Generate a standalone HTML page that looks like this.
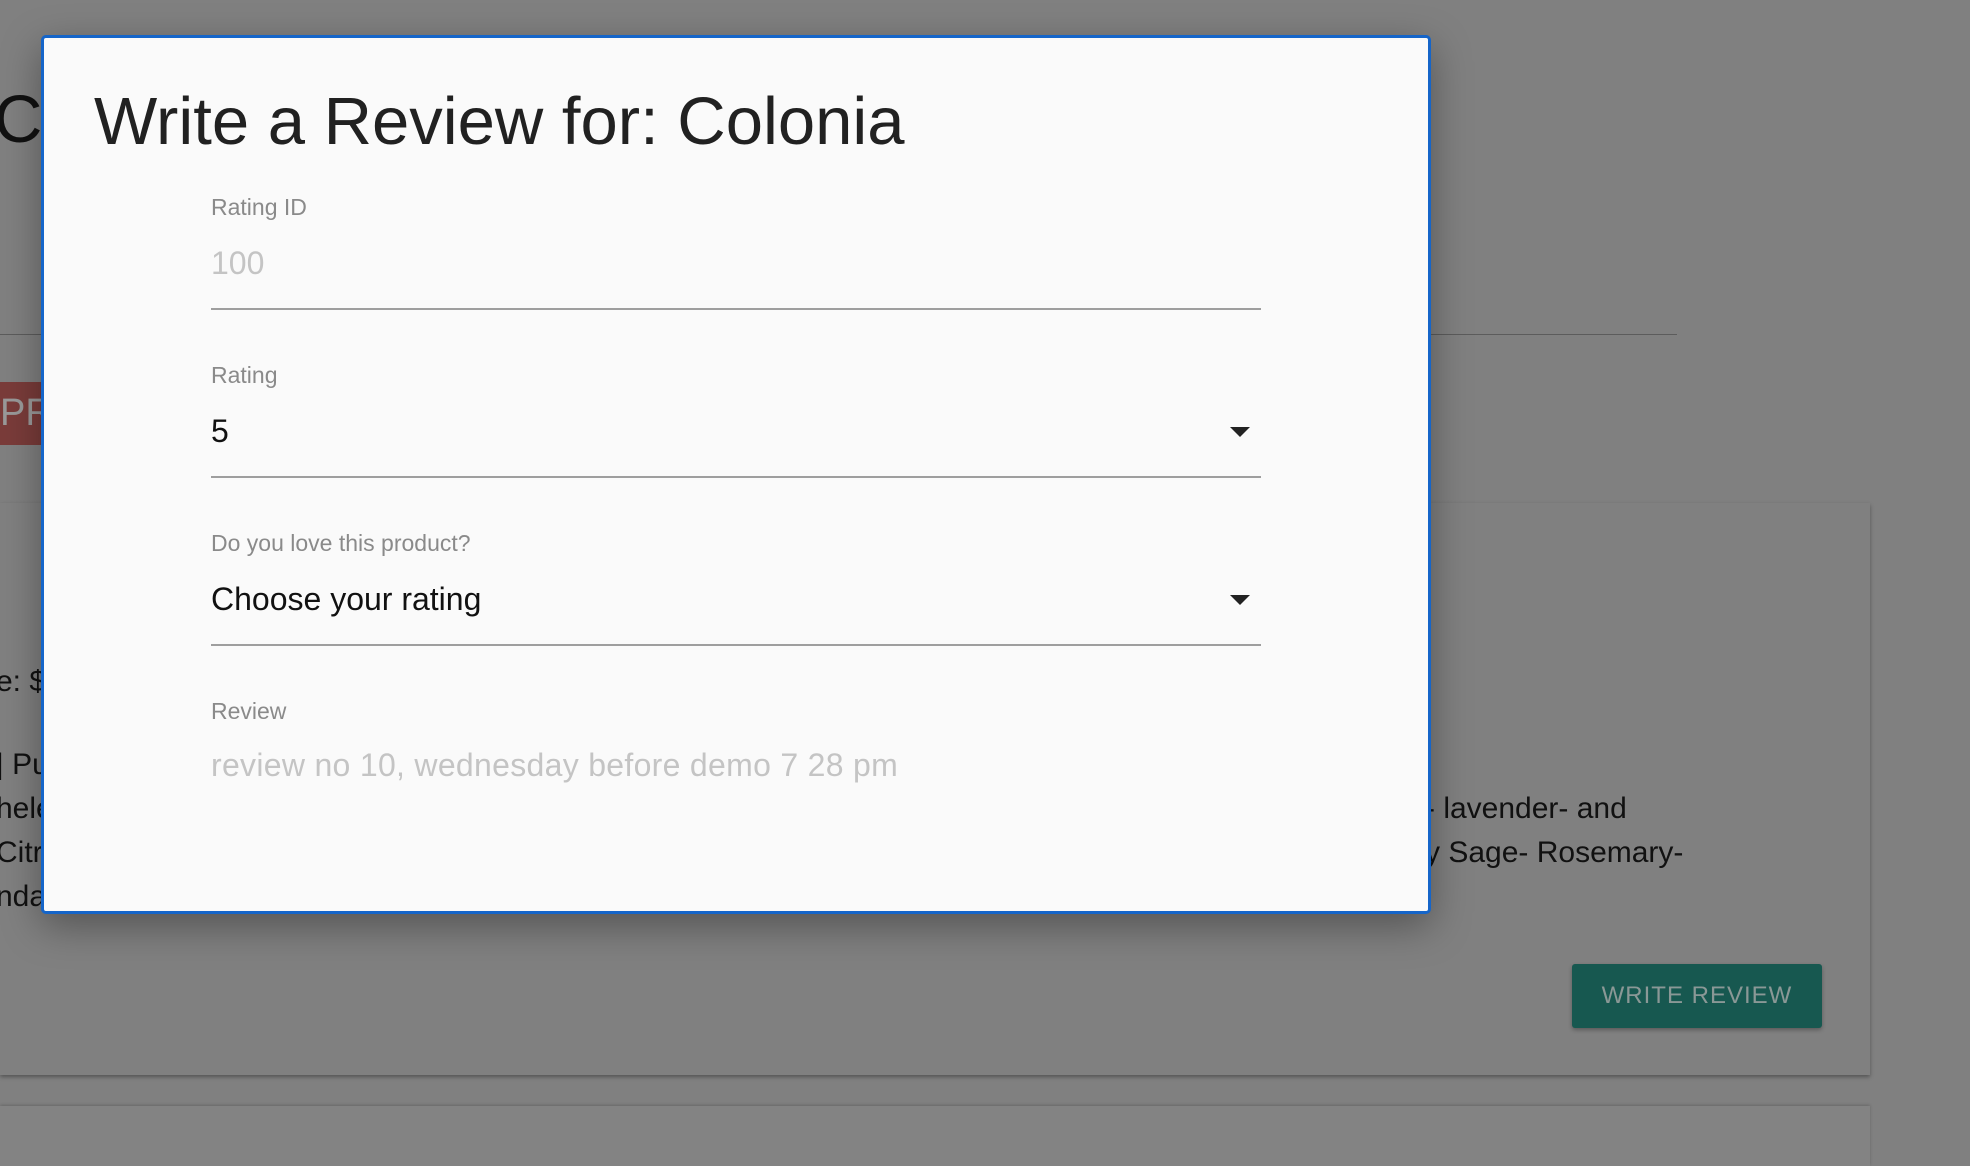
<!DOCTYPE html>
<html><head><meta charset="utf-8"><style>
html,body{margin:0;padding:0;width:1970px;height:1146px;overflow:hidden;background:#808080;font-family:"Liberation Sans",Arial,sans-serif;}
.abs{position:absolute}
.bg{color:#111}
</style></head><body>
<div class="abs bg" style="left:-6px;top:80px;font-size:67px;line-height:80px">C</div>
<div class="abs" style="left:0;top:334px;width:1677px;height:1px;background:#5c5c5c"></div>
<div class="abs" style="left:0;top:382px;width:60px;height:63px;background:#7a3c3a;color:#9a9a9a;font-size:38px;line-height:63px">PR</div>
<div class="abs" style="left:0;top:503px;width:1870px;height:572px;background:#808080;box-shadow:0 2px 4px rgba(0,0,0,.35)"></div>
<div class="abs bg" style="left:-4px;top:660px;font-size:30px;line-height:44px">e: $</div>
<div class="abs bg" style="left:-4px;top:743px;font-size:30px;line-height:44px">| Pu<br>hele<br>Citr<br>nda</div>
<div class="abs bg" style="left:1425px;top:787px;font-size:30px;line-height:44px">- lavender- and<br>y Sage- Rosemary-</div>
<div class="abs" style="left:1572px;top:964px;width:250px;height:64px;background:#175850;border-radius:3px;box-shadow:0 2px 4px rgba(0,0,0,.3);color:#8a9896;font-size:24px;line-height:64px;text-align:center;letter-spacing:1px">WRITE REVIEW</div>
<div class="abs" style="left:0;top:1106px;width:1870px;height:60px;background:#838383;box-shadow:0 -1px 3px rgba(0,0,0,.2)"></div>

<div class="abs" style="left:41px;top:35px;width:1384px;height:873px;background:#fafafa;border:3px solid #1565c9;border-radius:5px;box-shadow:0 12px 40px rgba(0,0,0,.35)">
  <div class="abs" style="left:50px;top:44px;font-size:67px;line-height:80px;color:#212121;white-space:nowrap">Write a Review for: Colonia</div>

  <div class="abs" style="left:167px;top:156px;font-size:23px;color:#8a8a8a">Rating ID</div>
  <div class="abs" style="left:167px;top:207px;font-size:32px;color:#c4c4c4">100</div>
  <div class="abs" style="left:167px;top:270px;width:1050px;height:2px;background:#9e9e9e"></div>

  <div class="abs" style="left:167px;top:324px;font-size:23px;color:#8a8a8a">Rating</div>
  <div class="abs" style="left:167px;top:375px;font-size:32px;color:#111">5</div>
  <div class="abs" style="left:1186px;top:389px;width:0;height:0;border-left:10px solid transparent;border-right:10px solid transparent;border-top:10px solid #222"></div>
  <div class="abs" style="left:167px;top:438px;width:1050px;height:2px;background:#9e9e9e"></div>

  <div class="abs" style="left:167px;top:492px;font-size:23px;color:#8a8a8a">Do you love this product?</div>
  <div class="abs" style="left:167px;top:543px;font-size:32px;color:#111">Choose your rating</div>
  <div class="abs" style="left:1186px;top:557px;width:0;height:0;border-left:10px solid transparent;border-right:10px solid transparent;border-top:10px solid #222"></div>
  <div class="abs" style="left:167px;top:606px;width:1050px;height:2px;background:#9e9e9e"></div>

  <div class="abs" style="left:167px;top:660px;font-size:23px;color:#8a8a8a">Review</div>
  <div class="abs" style="left:167px;top:709px;font-size:32px;letter-spacing:0.3px;color:#c4c4c4;white-space:nowrap">review no 10, wednesday before demo 7 28 pm</div>
</div>
</body></html>
